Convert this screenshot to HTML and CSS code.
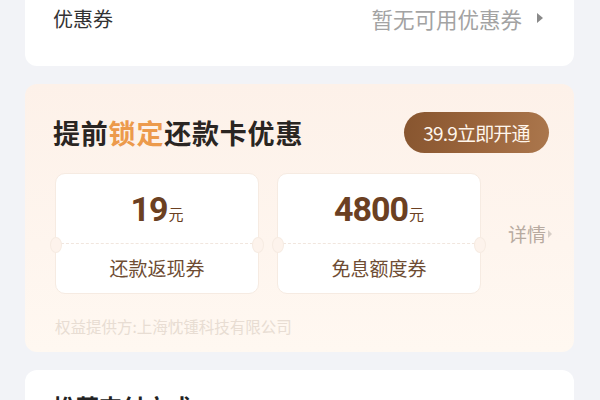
FILE: index.html
```html
<!DOCTYPE html>
<html lang="zh-CN">
<head>
    <meta charset="UTF-8">
    <meta name="viewport" content="width=device-width, initial-scale=1.0">
    <title>还款卡优惠</title>
    <link rel="stylesheet" href="styles.css">
</head>
<body>
    <div class="page">
        <div class="card coupon-card">
            <div class="row">
                <span class="row-label">优惠券</span>
                <span class="row-value">暂无可用优惠券<i class="tri"></i></span>
            </div>
        </div>

        <div class="card promo-card">
            <div class="promo-head">
                <h2 class="promo-title">提前<em>锁定</em>还款卡优惠</h2>
                <button class="open-btn">39.9立即开通</button>
            </div>
            <div class="tickets">
                <div class="ticket">
                    <div class="ticket-top"><b>19</b><small>元</small></div>
                    <div class="ticket-bottom">还款返现券</div>
                </div>
                <div class="ticket">
                    <div class="ticket-top"><b>4800</b><small>元</small></div>
                    <div class="ticket-bottom">免息额度券</div>
                </div>
                <a class="detail-link">详情<i class="tri small"></i></a>
            </div>
            <p class="provider">权益提供方:上海忱锺科技有限公司</p>
        </div>

        <div class="card pay-card">
            <h3 class="pay-title">推荐支付方式</h3>
        </div>
    </div>
</body>
</html>
```

FILE: styles.css
```css
body {
    margin: 0;
    background-color: #f2f3f7;
    font-family: "Noto Sans CJK SC", "Noto Sans", sans-serif;
    overflow: hidden;
}

.page {
    padding: 0 26px 0 25px;
    display: flex;
    flex-direction: column;
    gap: 18px;
}

.card {
    background-color: #fff;
    border-radius: 12px;
}

.coupon-card {
    margin-top: -28px;
    padding: 28px 31px 30px 28px;
}

.row {
    height: 36px;
    display: flex;
    justify-content: space-between;
    align-items: center;
}

.row-label {
    font-size: 20px;
    color: #333;
}

.row-value {
    font-size: 21.5px;
    color: #a3a3a3;
    display: flex;
    align-items: center;
}

.tri {
    display: inline-block;
    width: 0;
    height: 0;
    margin-left: 15px;
    border-top: 5px solid transparent;
    border-bottom: 5px solid transparent;
    border-left: 6px solid #8a8a8a;
}

.tri.small {
    margin-left: 2px;
    border-top-width: 4px;
    border-bottom-width: 4px;
    border-left: 4px solid #d8cfc8;
}

.promo-card {
    padding: 28px 25px 0 28px;
    height: 240px;
    background: linear-gradient(180deg, #fdf1e9 0%, #fef5ee 60%, #fff8f1 100%);
}

.promo-head {
    display: flex;
    justify-content: space-between;
    align-items: center;
    height: 41px;
}

.promo-title {
    margin: 0;
    font-size: 27px;
    font-weight: 700;
    color: #2a2522;
    letter-spacing: 0.8px;
}

.promo-title em {
    font-style: normal;
    color: #ec9a4c;
}

.open-btn {
    height: 41px;
    width: 145px;
    border: none;
    border-radius: 21px;
    background: linear-gradient(100deg, #87552f 0%, #9c663d 55%, #ab774d 100%);
    color: #fff6ec;
    font-family: "Noto Sans CJK SC", sans-serif;
    font-size: 19px;
    padding: 0;
    letter-spacing: -0.8px;
}

.tickets {
    margin-top: 20px;
    display: flex;
    align-items: center;
    gap: 18px;
    padding-left: 2px;
}

.ticket {
    position: relative;
    flex-shrink: 0;
    width: 204px;
    height: 121px;
    background-color: #fff;
    border: 1px solid #f6ebe2;
    border-radius: 10px;
    box-sizing: border-box;
    display: flex;
    flex-direction: column;
}

.ticket::before,
.ticket::after {
    content: "";
    position: absolute;
    top: 63px;
    width: 10px;
    height: 14px;
    background-color: #fdf3ec;
    border: 1px solid #f6ebe2;
    border-radius: 50%;
}

.ticket::before {
    left: -6px;
}

.ticket::after {
    right: -6px;
}

.ticket-top {
    height: 69px;
    display: flex;
    justify-content: center;
    align-items: center;
    color: #6b4022;
    border-bottom: 1px dashed #f1e6de;
}

.ticket-top b {
    font-family: "Roboto", sans-serif;
    font-size: 34px;
    font-weight: 700;
    letter-spacing: -1px;
}

.ticket-top small {
    font-size: 15px;
    margin-top: 10px;
    margin-left: 1px;
}

.ticket-bottom {
    flex: 1;
    display: flex;
    justify-content: center;
    align-items: center;
    font-size: 19px;
    color: #6e4c33;
    padding-bottom: 2px;
}

.detail-link {
    margin-left: 9px;
    font-size: 19px;
    color: #b7aaa0;
    white-space: nowrap;
    display: flex;
    align-items: center;
}

.provider {
    margin: 21px 0 0 2px;
    font-size: 15.5px;
    color: #e8ddd3;
}

.pay-card {
    height: 60px;
    padding: 19px 28px;
}

.pay-title {
    margin: 0;
    font-size: 23px;
    font-weight: 700;
    color: #222;
}
```
